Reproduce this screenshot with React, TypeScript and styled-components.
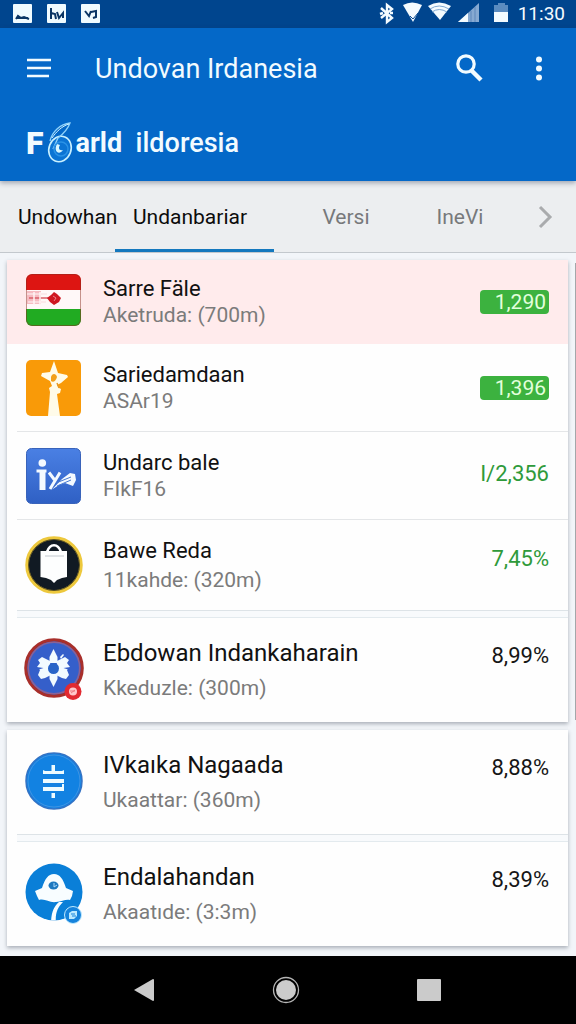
import React from "react";
import styled, { createGlobalStyle, css } from "styled-components";

const GlobalStyle = createGlobalStyle`
  *, *::before, *::after { box-sizing: border-box; }
  body {
    margin: 0;
    background: #f2f5f9;
    color: #111;
    font-family: Roboto, "Liberation Sans", sans-serif;
  }
  button { border: 0; padding: 0; background: none; color: inherit; font: inherit; cursor: pointer; }
  svg { display: block; flex: none; overflow: visible; }
`;

type Density = "compact" | "medium" | "large";

const Page = styled.div`
  display: flex;
  flex-direction: column;
  min-height: 100vh;
`;

const StatusBar = styled.div`
  display: flex;
  align-items: center;
  justify-content: space-between;
  height: 28px;
  padding: 0 11px 0 13px;
  background: #00458e;
  color: #f4fbff;
`;

const StatusGroup = styled.div<{ $gap: number }>`
  display: flex;
  align-items: center;
  gap: ${(p) => p.$gap}px;
`;

const Clock = styled.time`
  font-size: 19px;
  line-height: 24px;
`;

const Header = styled.header`
  position: relative;
  z-index: 1;
  background: #0468c8;
  color: #f2fbff;
  box-shadow: 0 2px 5px rgba(40, 50, 80, 0.4);
`;

const Toolbar = styled.div`
  display: flex;
  align-items: center;
  height: 80px;
  padding: 0 22px 0 24px;
`;

const IconButton = styled.button`
  display: grid;
  place-items: center;
  width: 30px;
  height: 48px;
`;

const Title = styled.h1`
  flex: 1;
  margin: 0;
  padding: 2px 0 0 41px;
  font-size: 27px;
  font-weight: 400;
  line-height: 36px;
  white-space: nowrap;
`;

const Actions = styled.div`
  display: flex;
  gap: 40px;
`;

const Brand = styled.div`
  display: flex;
  align-items: center;
  height: 73px;
  padding: 0 26px 4px;
  font-size: 27px;
  font-weight: 500;
  line-height: 32px;
  white-space: pre;
`;

const BrandInitial = styled.span`
  font-size: 32px;
  font-weight: 900;
`;

const BrandLead = styled.span`
  font-weight: 700;
`;

const Tabs = styled.nav`
  display: grid;
  grid-template-columns: 115fr 159fr 144fr 84fr 74fr;
  height: 72px;
  background: #eceef0;
  border-bottom: 1px solid #c3c8cd;
`;

const Tab = styled.button<{ $tone: "dark" | "muted"; $selected?: boolean }>`
  min-width: 0;
  padding: 4px 0 0;
  font-size: 21px;
  line-height: 26px;
  white-space: nowrap;
  color: ${(p) => (p.$tone === "dark" ? "#0c0c0c" : "#77797b")};
  border-bottom: 3px solid ${(p) => (p.$selected ? "#1478be" : "transparent")};
  ${(p) =>
    p.$tone === "dark" &&
    css`
      padding-left: 18px;
      text-align: left;
    `}
`;

const NextTab = styled.button`
  display: grid;
  place-items: center;
  padding-left: 12px;
  color: #a9abad;
`;

const Main = styled.main`
  position: relative;
  flex: 1;
  display: flex;
  flex-direction: column;
  gap: 8px;
  padding: 7px 8px 10px 7px;
`;

const ScrollThumb = styled.div`
  position: absolute;
  top: 10px;
  right: 0;
  width: 1px;
  height: 65%;
  background: #a4a7aa;
`;

const Card = styled.ul`
  margin: 0;
  padding: 0;
  list-style: none;
  background: #fefefe;
  box-shadow: 0 2px 4px rgba(60, 70, 85, 0.4);
`;

const rowHeight: Record<Density, number> = { compact: 87, medium: 90, large: 104 };
const lineGap: Record<Density, number> = { compact: 0, medium: 3, large: 9 };
const valueLift: Record<Density, number> = { compact: 4, medium: 12, large: 28 };

const Row = styled.li<{ $density: Density; $highlight?: boolean }>`
  display: flex;
  align-items: center;
  gap: 19px;
  min-height: ${(p) => (p.$highlight ? 84 : rowHeight[p.$density])}px;
  padding: 0 19px 0 17px;
  background: ${(p) => (p.$highlight ? "#ffebec" : "transparent")};
`;

const Divider = styled.li<{ $band?: boolean }>`
  height: ${(p) => (p.$band ? 8 : 1)}px;
  margin-left: 10px;
  background: ${(p) => (p.$band ? "#f8fafc" : "#e4e6e8")};
  ${(p) =>
    p.$band &&
    css`
      border-top: 1px solid #dde3e7;
      border-bottom: 1px solid #e3eaee;
    `}
`;

const Labels = styled.div<{ $density: Density }>`
  flex: 1;
  display: flex;
  flex-direction: column;
  gap: ${(p) => lineGap[p.$density]}px;
  line-height: 26px;
  white-space: nowrap;
`;

const Name = styled.span<{ $large: boolean }>`
  font-size: ${(p) => (p.$large ? 24 : 22)}px;
`;

const Detail = styled.span`
  font-size: 21px;
  color: #7b7b7b;
`;

const Value = styled.span<{ $density: Density; $green?: boolean }>`
  padding-bottom: ${(p) => valueLift[p.$density]}px;
  font-size: 22px;
  line-height: 26px;
  color: ${(p) => (p.$green ? "#2f9a3a" : "#161616")};
`;

const Chip = styled.span`
  width: 69px;
  padding-right: 3px;
  border-radius: 4px;
  background: #3cb23f;
  color: #e2ffdc;
  font-size: 21px;
  line-height: 24px;
  text-align: right;
`;

const NavBar = styled.nav`
  display: grid;
  grid-template-columns: 1fr 1fr 1fr;
  height: 68px;
  padding: 0 76px 0 73px;
  background: #000;
`;

const NavButton = styled.button`
  display: grid;
  place-items: center;
`;

const NoteIcon = ({ path }: { path: string }) => (
  <svg width="20" height="20" viewBox="0 0 20 20" fill="none">
    <rect x="0" y="0" width="19" height="19" rx="1" fill="#f0fbff" />
    <path d={path} stroke="#0a3564" strokeWidth="2" />
  </svg>
);

const StatusIcons = () => (
  <svg width="130" height="24" viewBox="0 0 130 24" fill="none">
    <path d="M2 6l11 10-5 4V3l5 4-11 9M1 12l3-1M14 11h-3" stroke="#f4fbff" strokeWidth="2.4" />
    <path d="M24 3Q33-2 43 3L34 20Z" fill="#f4fbff" />
    <path d="M31 14l3 3 5-6" stroke="#0a4c93" strokeWidth="1" />
    <path d="M49 4Q60-3 72 4L61 18Z" fill="#f4fbff" />
    <path d="M51 7Q60 1 70 7M53 10Q60 5 68 10" stroke="#7fa8d2" strokeWidth="1" />
    <path d="M79 20L100 1V20Z" fill="#86a9d2" />
    <path d="M79 20L89 11V20Z" fill="#f4fbff" />
    <path d="M92 9v11M96 5v15" stroke="#5c86bb" strokeWidth="1" />
    <path d="M115 3h4V1h7v2h3v7h-14z" fill="#5b8bbf" />
    <path d="M115 10h14v10h-14z" fill="#f4fbff" />
  </svg>
);

const MenuIcon = () => (
  <svg width="30" height="24" viewBox="0 0 30 24" stroke="#f2fbff" strokeWidth="2.6">
    <path d="M3 4h24M3 12h24M3 20h22" />
  </svg>
);

const SearchIcon = () => (
  <svg width="30" height="30" viewBox="0 0 30 30" fill="none" stroke="#f2fbff">
    <circle cx="12" cy="11" r="8.2" strokeWidth="3.2" />
    <path d="M17 17l10 10" strokeWidth="4.4" />
  </svg>
);

const MoreIcon = () => (
  <svg width="30" height="28" viewBox="0 0 30 28" fill="#f2fbff">
    <circle cx="15" cy="5.5" r="3" />
    <circle cx="15" cy="14.5" r="3" />
    <circle cx="15" cy="23.5" r="3" />
  </svg>
);

const BrandMark = () => (
  <svg width="32" height="42" viewBox="0 0 32 42" fill="none">
    <ellipse cx="16" cy="27" rx="11" ry="13" fill="#0b74d4" stroke="#c9f0ff" strokeWidth="1.6" transform="rotate(22 16 27)" />
    <path d="M6 19C8 10 16 2 26 1C24 7 19 12 14 16L9 27" stroke="#8fd2fa" strokeWidth="1.3" />
    <path d="M8 16C12 10 18 4 25 2" stroke="#d8f6ff" strokeWidth="1" />
    <path d="M13 22c-4 7 2 12 6 6-4 1-5-2-3-5" fill="#d8f6ff" />
    <circle cx="17" cy="27" r="7" stroke="#2a92e6" strokeWidth="1.5" />
  </svg>
);

const FlagIcon = () => (
  <svg width="60" height="60" viewBox="0 0 60 60">
    <clipPath id="flagShape">
      <rect x="2" y="2" width="55" height="52" rx="6" />
    </clipPath>
    <g clipPath="url(#flagShape)">
      <path fill="#dd1512" d="M0 0h60v18H0z" />
      <path fill="#fff8f8" d="M0 18h60v19H0z" />
      <path fill="#21ab22" d="M0 37h60v21H0z" />
      <path fill="#f6bcc2" d="M3 19h14v13H3z" />
      <path d="M3 22h20M4 30h18" stroke="#fbe3e6" strokeWidth="1.5" />
      <path d="M5 26h19" stroke="#d9606a" strokeWidth="1.5" />
      <path d="M10 20v13M16 20v13" stroke="#fff4f5" strokeWidth="1.5" />
      <path d="M30 20l3 2 4 4-2 4-5 3-4-3-3-4 4-3z" fill="#cf1720" />
      <path d="M29 24l3 2-2 3" stroke="#f0808a" fill="none" />
    </g>
    <rect x="2.5" y="2.5" width="54" height="51" rx="6" fill="none" stroke="#8b2a1b" strokeOpacity="0.5" />
  </svg>
);

const StarIcon = () => (
  <svg width="60" height="60" viewBox="0 0 60 60">
    <rect x="2" y="2" width="55" height="56" rx="5" fill="#f99a08" />
    <path d="M30 3l4 12 9 2 1 2-7 6-4 2 2 3 2 1-1 4-3 1 3 22H24l2-24-1-4 3-2-2-5-9-5 1-3 8-1z" fill="#fffbe9" />
    <path d="M27 19c1-4 5-4 6 0-1 4-4 6-6 4z" fill="#f2a01c" />
    <path d="M33 25l2 5" stroke="#e69a25" strokeWidth="1.5" />
  </svg>
);

const PersonIcon = () => (
  <svg width="60" height="60" viewBox="0 0 60 60">
    <defs>
      <linearGradient id="personTile" x1="0" y1="0" x2="0" y2="1">
        <stop offset="0" stopColor="#4a80e4" />
        <stop offset="1" stopColor="#2f60c4" />
      </linearGradient>
    </defs>
    <rect x="2.5" y="2.5" width="54" height="55" rx="5" fill="url(#personTile)" stroke="#3963ba" />
    <g fill="#f4faff">
      <circle cx="18.3" cy="17" r="3.8" />
      <path d="M12.500 23.500h10v3h-1v17.500h-6v-17.500h-3z" />
      <path d="M28 43.500L38 33l8-6 5 1 1 6-3 6-8-3-6 2z" />
    </g>
    <path d="M25 26.500l6 8M36 26.500L26 43" stroke="#f4faff" strokeWidth="3" />
    <path d="M32 37l15-6M33 40l14-6" stroke="#4778d2" strokeWidth="1" />
  </svg>
);

const BagIcon = () => (
  <svg width="60" height="60" viewBox="0 0 60 60">
    <circle cx="30" cy="30" r="27" fill="#111a23" stroke="#edc83c" strokeWidth="3.5" />
    <circle cx="30" cy="30" r="25.5" fill="none" stroke="#5c5222" strokeWidth="1" />
    <path d="M23 17c3-9 11-9 14 0" fill="none" stroke="#fff" strokeWidth="2.6" />
    <path d="M16.500 16h26.500v26l-5 1-5 2-3 3-3-3-5-2-5.500-1z" fill="#fdfefe" />
    <path d="M21 21h19" stroke="#dfe3e6" strokeWidth="2" />
  </svg>
);

const FlowerIcon = () => (
  <svg width="60" height="60" viewBox="0 0 60 60">
    <circle cx="30" cy="28" r="28.200" fill="#355fca" stroke="#a82f2b" strokeWidth="3.200" />
    <circle cx="30" cy="28" r="25.700" fill="none" stroke="#8c6294" strokeWidth="1.500" />
    <g fill="#f2fbff" transform="translate(0 -1)">
      <path d="M29.500 10l4 8v6h-8v-6zM29.500 48l4-8v-6h-8v6z" />
      <path d="M26 22l-8-4-4 3 2 3-3 4 3 3-2 5 3 4 4-1 6-3zM33 22l8-4 4 3-2 3 3 4-3 3 2 5-3 4-4-1-6-3z" />
      <path d="M36 18l3-3 1 1-3 4z" />
    </g>
    <path d="M12.500 27l7 1-6 2zM46.500 27l-7 1 6 2z" fill="#355fca" />
    <circle cx="29.500" cy="28.500" r="5.500" fill="#2865c8" />
    <circle cx="49" cy="51.500" r="8.500" fill="#e22a31" />
    <circle cx="49" cy="51.500" r="4" fill="#ffc8ca" />
    <path d="M46 51h5M47 53l4-3" stroke="#ee7a80" strokeWidth="1" />
  </svg>
);

const CoinIcon = () => (
  <svg width="60" height="60" viewBox="0 0 60 60">
    <circle cx="30" cy="29" r="28" fill="#1282e2" stroke="#3372c4" strokeWidth="1.500" />
    <circle cx="30" cy="29" r="26" fill="none" stroke="#4094e2" strokeWidth="1" />
    <g fill="#edfbff">
      <path d="M27.500 13h3.500v6h7l2-1v4H19v-4l2 1h6.500z" />
      <path d="M19 27h21v4H19zM19 35h19v-3h2v7H19z" />
      <path d="M27.500 41h3.500v5h-3.500z" />
    </g>
  </svg>
);

const HatIcon = () => (
  <svg width="60" height="60" viewBox="0 0 60 60">
    <clipPath id="hatDisc">
      <circle cx="30" cy="28" r="28.500" />
    </clipPath>
    <circle cx="30" cy="28" r="28.500" fill="#0a7fd8" />
    <g clipPath="url(#hatDisc)">
      <path d="M11 27l7-3c3-9 6-14 12-14s9 5 12 14l7 3-1 5-2 4c-5-1-8 2-14 2-7 1-11-4-17-2l-2-4z" fill="#f8fdff" />
      <path d="M27 60c0-11 3-18 8-22h4c-6 6-8 12-7 22z" fill="#f8fdff" />
    </g>
    <ellipse cx="29.500" cy="21.500" rx="5" ry="4" fill="#1d78bf" />
    <path d="M30 19v4l3-2" stroke="#a9d8fa" fill="none" />
    <circle cx="49" cy="51" r="8.500" fill="#1683dc" stroke="#c0eaff" strokeWidth="1" />
    <path d="M45 49l3-2h5v5l-3 3h-5z" fill="#bce9ff" />
    <path d="M47 50h4M48 52h4" stroke="#1683dc" />
  </svg>
);

interface Item {
  name: string;
  detail: string;
  value: string;
  density: Density;
  kind?: "chip" | "green";
  highlight?: boolean;
  icon: React.FC;
}

const groups: Item[][] = [
  [
    { name: "Sarre Fäle", detail: "Aketruda: (700m)", value: "1,290", density: "compact", kind: "chip", highlight: true, icon: FlagIcon },
    { name: "Sariedamdaan", detail: "ASAr19", value: "1,396", density: "compact", kind: "chip", icon: StarIcon },
    { name: "Undarc bale", detail: "FIkF16", value: "I/2,356", density: "compact", kind: "green", icon: PersonIcon },
    { name: "Bawe Reda", detail: "11kahde: (320m)", value: "7,45%", density: "medium", kind: "green", icon: BagIcon },
    { name: "Ebdowan Indankaharain", detail: "Kkeduzle: (300m)", value: "8,99%", density: "large", icon: FlowerIcon },
  ],
  [
    { name: "IVkaıka Nagaada", detail: "Ukaattar: (360m)", value: "8,88%", density: "large", icon: CoinIcon },
    { name: "Endalahandan", detail: "Akaatıde: (3:3m)", value: "8,39%", density: "large", icon: HatIcon },
  ],
];

const ItemRow = ({ item }: { item: Item }) => {
  const Icon = item.icon;
  return (
    <Row $density={item.density} $highlight={item.highlight}>
      <Icon />
      <Labels $density={item.density}>
        <Name $large={item.density === "large"}>{item.name}</Name>
        <Detail>{item.detail}</Detail>
      </Labels>
      {item.kind === "chip" ? (
        <Chip>{item.value}</Chip>
      ) : (
        <Value $density={item.density} $green={item.kind === "green"}>
          {item.value}
        </Value>
      )}
    </Row>
  );
};

export default function App() {
  return (
    <Page>
      <GlobalStyle />
      <StatusBar>
        <StatusGroup $gap={14}>
          <NoteIcon path="M3 15l2-3 3 2 3-1 5 2M4 14h11" />
          <NoteIcon path="M4 15V4M4 9l4 1 1 5M10 8l2 6 4-5v5" />
          <NoteIcon path="M4 7l4 5 2-5M10 8l5-1v6l-3 1" />
        </StatusGroup>
        <StatusGroup $gap={9}>
          <StatusIcons />
          <Clock>11:30</Clock>
        </StatusGroup>
      </StatusBar>
      <Header>
        <Toolbar>
          <IconButton aria-label="Menu">
            <MenuIcon />
          </IconButton>
          <Title>Undovan Irdanesia</Title>
          <Actions>
            <IconButton aria-label="Search">
              <SearchIcon />
            </IconButton>
            <IconButton aria-label="More">
              <MoreIcon />
            </IconButton>
          </Actions>
        </Toolbar>
        <Brand>
          <BrandInitial>F</BrandInitial>
          <BrandMark />
          <BrandLead>arld</BrandLead>
          <span>{"  ildoresia"}</span>
        </Brand>
      </Header>
      <Tabs>
        <Tab $tone="dark">Undowhan</Tab>
        <Tab $tone="dark" $selected>
          Undanbariar
        </Tab>
        <Tab $tone="muted">Versi</Tab>
        <Tab $tone="muted">IneVi</Tab>
        <NextTab aria-label="Next">
          <svg width="16" height="26" viewBox="0 0 16 26" fill="none" stroke="currentColor" strokeWidth="3">
            <path d="M3 3l10 10L3 23" />
          </svg>
        </NextTab>
      </Tabs>
      <Main>
        <ScrollThumb />
        {groups.map((items, g) => (
          <Card key={g}>
            {items.map((item, i) => (
              <React.Fragment key={item.name}>
                {i > 0 && !items[i - 1].highlight && (
                  <Divider role="presentation" $band={item.density === "large"} />
                )}
                <ItemRow item={item} />
              </React.Fragment>
            ))}
          </Card>
        ))}
      </Main>
      <NavBar>
        <NavButton aria-label="Back">
          <svg width="24" height="26" viewBox="0 0 24 26" fill="#cbcbcb">
            <path d="M2 13L21 2q1 0 1 1v20q0 1-1 1z" />
          </svg>
        </NavButton>
        <NavButton aria-label="Home">
          <svg width="28" height="28" viewBox="0 0 28 28">
            <circle cx="14" cy="14" r="12.500" fill="none" stroke="#b5b5b5" strokeWidth="1.300" />
            <circle cx="14" cy="14" r="10" fill="#cbcbcb" />
          </svg>
        </NavButton>
        <NavButton aria-label="Recent apps">
          <svg width="24" height="22" viewBox="0 0 24 22" fill="#cbcbcb">
            <rect width="24" height="22" rx="1" />
          </svg>
        </NavButton>
      </NavBar>
    </Page>
  );
}
